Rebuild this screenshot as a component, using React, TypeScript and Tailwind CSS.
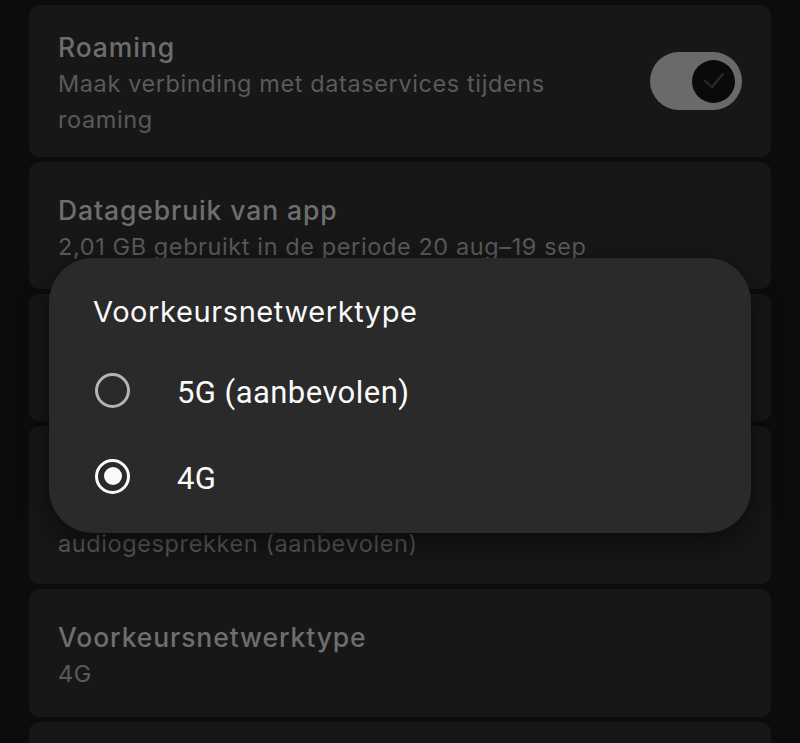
import React from "react";

const sans = { fontFamily: "Inter, 'Noto Sans', sans-serif" };

function Card({
  title,
  lines,
  h,
  children,
}: {
  title?: string;
  lines: string[];
  h: string;
  children?: React.ReactNode;
}) {
  return (
    <div className={`flex items-center rounded-[10px] bg-[#171717] pl-[29px] pr-[29px] ${h}`}>
      <div className="flex flex-1 flex-col pt-[4px]">
        {title !== undefined && (
          <div className="h-[38px] text-[26.5px] leading-[38px] font-medium tracking-[0.9px] text-[#6e6e6e]">{title}</div>
        )}
        {lines.map((l, i) => (
          <div key={i} className="h-[36px] text-[23.5px] leading-[36px] tracking-[0.6px] text-[#5a5a5a]">
            {l}
          </div>
        ))}
      </div>
      {children}
    </div>
  );
}

function Toggle() {
  return (
    <div className="flex h-[58px] w-[92px] items-center justify-end rounded-full bg-[#6a6a6a] pr-[7px]">
      <div className="flex h-[43px] w-[43px] items-center justify-center rounded-full bg-[#0a0a0a]">
        <svg width="24" height="20" viewBox="0 0 24 20" fill="none">
          <path d="M3 10l7 6L21 3" stroke="#2a2a2a" strokeWidth="2.2" strokeLinecap="round" strokeLinejoin="round" />
        </svg>
      </div>
    </div>
  );
}

function Radio({ checked }: { checked: boolean }) {
  return (
    <div
      className={`flex h-[35px] w-[35px] items-center justify-center rounded-full border-[3px] ${
        checked ? "border-[#fafafa]" : "border-[#b4b4b4]"
      }`}
    >
      {checked && <div className="h-[18px] w-[18px] rounded-full bg-[#fafafa]" />}
    </div>
  );
}

export default function App() {
  const options = [
    { label: "5G (aanbevolen)", checked: false },
    { label: "4G", checked: true },
  ];

  return (
    <div className="relative h-[743px] w-[800px] overflow-hidden bg-[#0c0c0c]" style={sans}>
      <div className="flex flex-col gap-[5px] px-[29px] pt-[5px]">
        <Card title="Roaming" lines={["Maak verbinding met dataservices tijdens", "roaming"]} h="h-[152px]">
          <Toggle />
        </Card>
        <Card title="Datagebruik van app" lines={["2,01 GB gebruikt in de periode 20 aug–19 sep"]} h="h-[127px]" />
        {/* card fully covered by the dialog */}
        <Card title="" lines={[""]} h="h-[127px]" />
        <Card title="" lines={["", "audiogesprekken (aanbevolen)"]} h="h-[158px]" />
        <Card title="Voorkeursnetwerktype" lines={["4G"]} h="h-[128px]" />
        <Card lines={[]} h="h-[128px]" />
      </div>

      {/* dialog */}
      <div className="absolute left-[49px] top-[258px] flex h-[275px] w-[702px] flex-col rounded-[44px] bg-[#2a2a2a] pl-[44px] pt-[36px] shadow-[0_10px_30px_rgba(0,0,0,0.55)]">
        <div className="text-[29px] leading-[36px] tracking-[0.6px] text-[#fafafa]">Voorkeursnetwerktype</div>
        <div className="mt-[17px] flex flex-col">
          {options.map((o) => (
            <div key={o.label} className="flex h-[86px] items-center pl-[2px]">
              <Radio checked={o.checked} />
              <span
                className="ml-[47px] pt-[5px] text-[31px] leading-[36px] tracking-[0.45px] text-[#fafafa]"
                style={{ fontFamily: "Roboto, 'Liberation Sans', sans-serif" }}
              >
                {o.label}
              </span>
            </div>
          ))}
        </div>
      </div>
    </div>
  );
}
